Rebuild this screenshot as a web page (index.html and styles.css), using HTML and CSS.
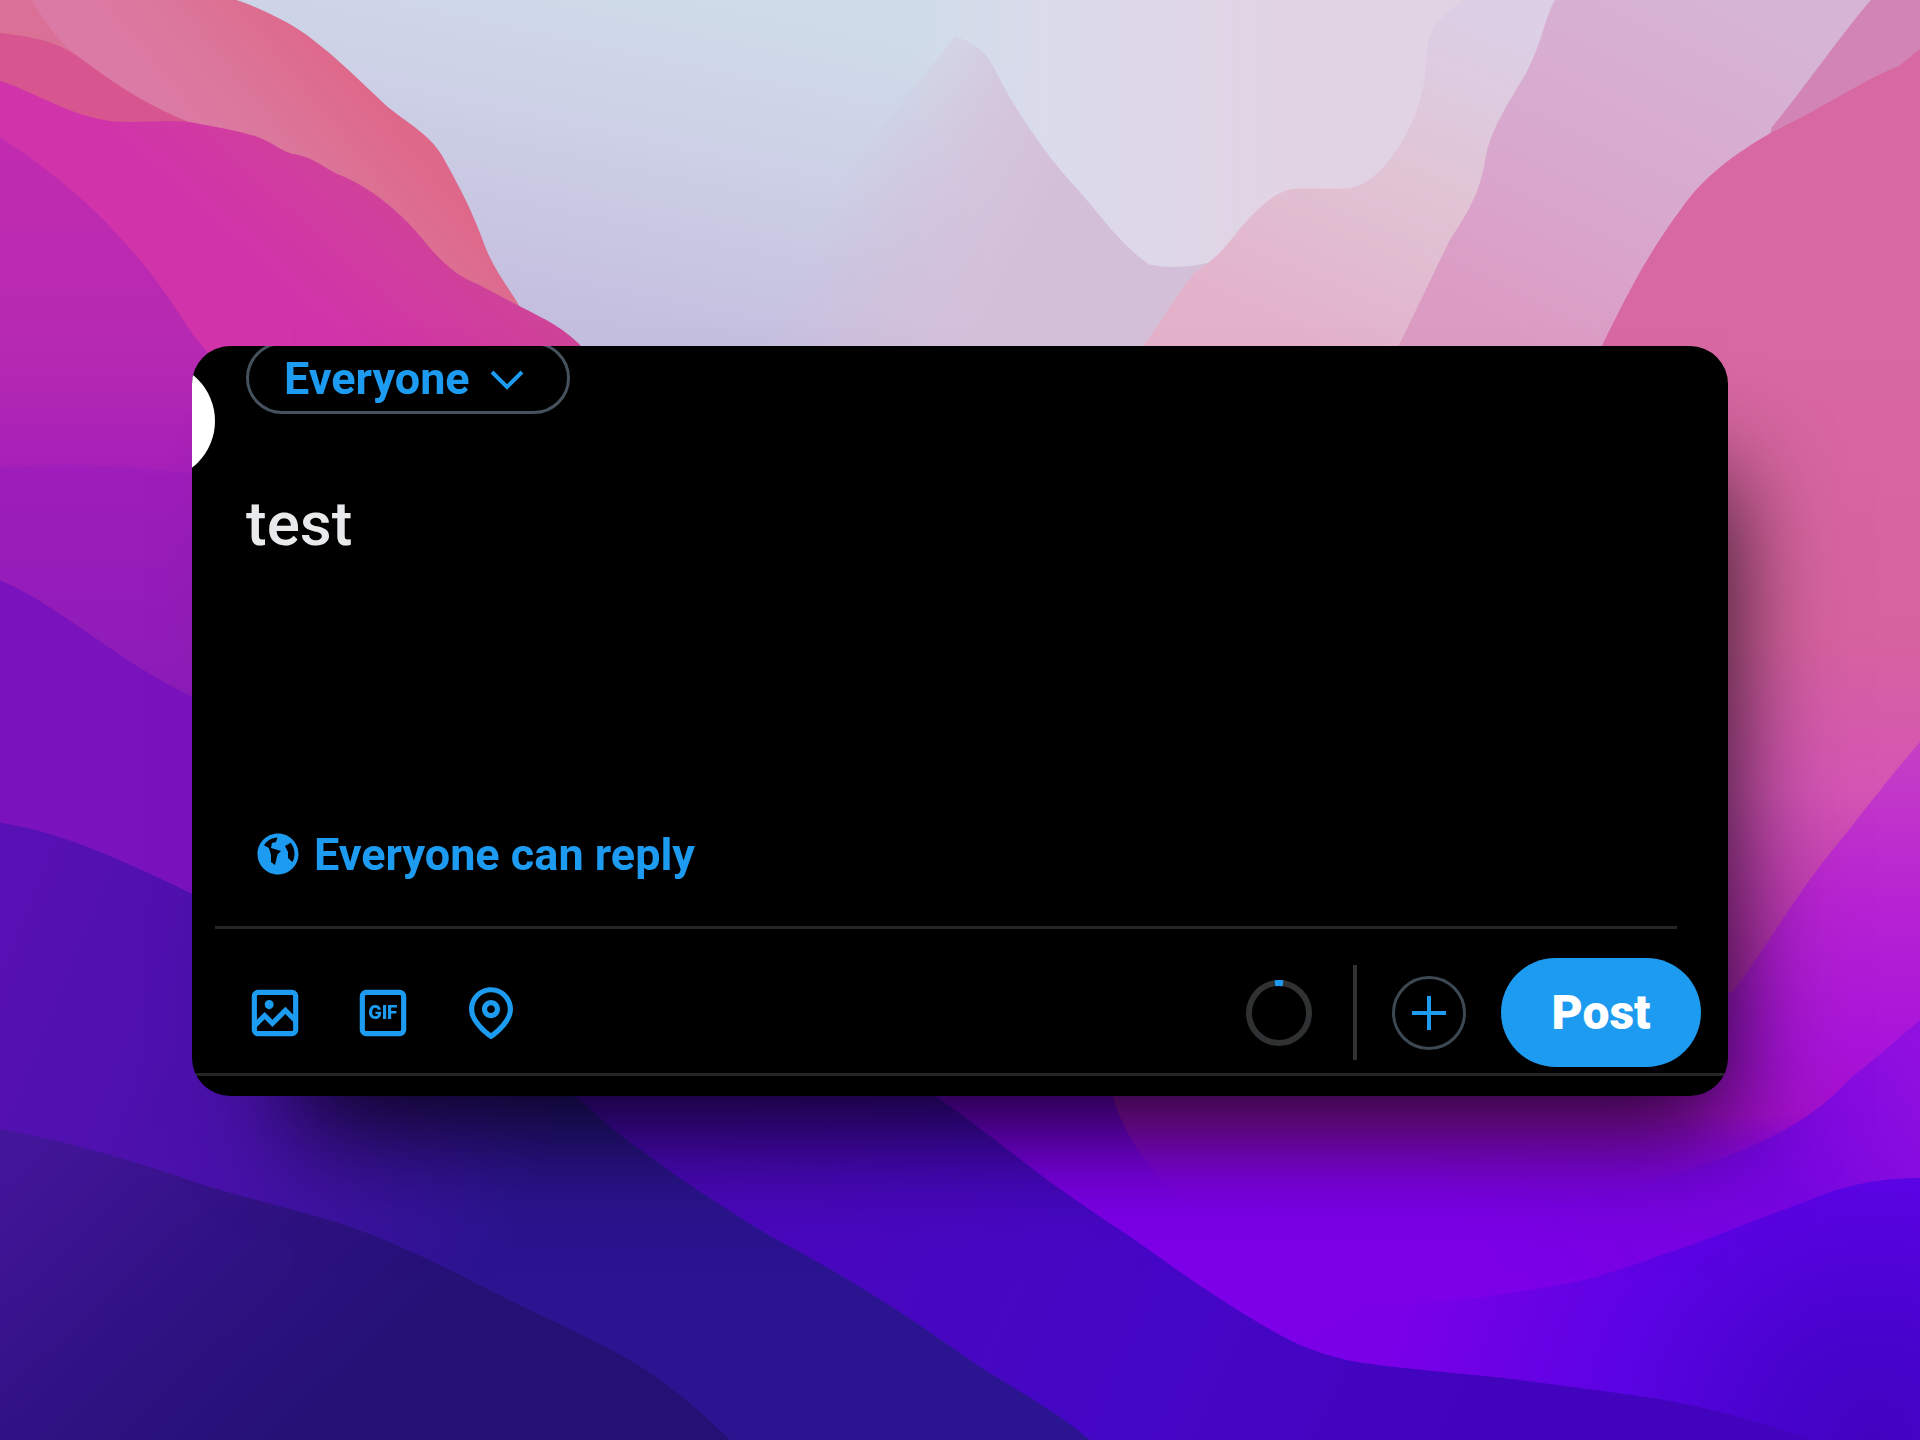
FILE: index.html
```html
<!DOCTYPE html>
<html lang="en">
<head>
<meta charset="utf-8">
<meta name="viewport" content="width=device-width, initial-scale=1">
<title>Compose post</title>
<link rel="stylesheet" href="styles.css">
</head>
<body>
<svg class="wallpaper" viewBox="0 0 1568 1176" preserveAspectRatio="xMidYMid slice" aria-hidden="true">
  <defs>
    <linearGradient id="sky" x1="620" y1="0" x2="560" y2="283" gradientUnits="userSpaceOnUse"><stop offset="0" stop-color="#cfdce9"/><stop offset=".45" stop-color="#cdd0e6"/><stop offset="1" stop-color="#c4bedf"/></linearGradient>
    <linearGradient id="skyRight" x1="740" y1="0" x2="1060" y2="0" gradientUnits="userSpaceOnUse"><stop offset="0" stop-color="#dadbea" stop-opacity="0"/><stop offset=".35" stop-color="#dadbeb"/><stop offset="1" stop-color="#e2d3e4"/></linearGradient>
    <linearGradient id="peak" x1="670" y1="180" x2="810" y2="250" gradientUnits="userSpaceOnUse"><stop offset="0" stop-color="#d3bdd8" stop-opacity="0"/><stop offset=".6" stop-color="#d3bfd9" stop-opacity=".75"/><stop offset="1" stop-color="#d4bfd9"/></linearGradient>
    <linearGradient id="peach" x1="1180" y1="0" x2="1060" y2="283" gradientUnits="userSpaceOnUse"><stop offset="0" stop-color="#dccfe6"/><stop offset=".45" stop-color="#e0c5d5"/><stop offset="1" stop-color="#e3b1ca"/></linearGradient>
    <linearGradient id="orchid" x1="1400" y1="0" x2="1260" y2="283" gradientUnits="userSpaceOnUse"><stop offset="0" stop-color="#d6b4d4"/><stop offset=".6" stop-color="#d9a7ce"/><stop offset="1" stop-color="#dc9bc3"/></linearGradient>
    <linearGradient id="rose" x1="0" y1="283" x2="0" y2="800" gradientUnits="userSpaceOnUse"><stop offset="0" stop-color="#d868a2"/><stop offset=".45" stop-color="#d7639f"/><stop offset=".7" stop-color="#d455b4"/><stop offset="1" stop-color="#b52bb8"/></linearGradient>
    <linearGradient id="coral" x1="180" y1="150" x2="290" y2="60" gradientUnits="userSpaceOnUse"><stop offset="0" stop-color="#db7aa5"/><stop offset=".4" stop-color="#db779b"/><stop offset="1" stop-color="#de688a"/></linearGradient>
    <linearGradient id="magenta" x1="220" y1="230" x2="310" y2="130" gradientUnits="userSpaceOnUse"><stop offset="0" stop-color="#d133aa"/><stop offset="1" stop-color="#cf4497"/></linearGradient>
    <linearGradient id="plum" x1="0" y1="112" x2="0" y2="480" gradientUnits="userSpaceOnUse"><stop offset="0" stop-color="#c12bb0"/><stop offset=".5" stop-color="#b529b2"/><stop offset=".8" stop-color="#a11dba"/><stop offset="1" stop-color="#8f1dba"/></linearGradient>
    <linearGradient id="plumLow" x1="0" y1="380" x2="0" y2="570" gradientUnits="userSpaceOnUse"><stop offset="0" stop-color="#9f1dba"/><stop offset="1" stop-color="#8c1cb8"/></linearGradient>
    <linearGradient id="indigo" x1="0" y1="780" x2="440" y2="960" gradientUnits="userSpaceOnUse"><stop offset="0" stop-color="#5710b3"/><stop offset=".5" stop-color="#4811ab"/><stop offset="1" stop-color="#2a148f"/></linearGradient>
    <linearGradient id="navy" x1="30" y1="930" x2="260" y2="1176" gradientUnits="userSpaceOnUse"><stop offset="0" stop-color="#431599"/><stop offset=".5" stop-color="#301284"/><stop offset="1" stop-color="#231174"/></linearGradient>
    <linearGradient id="fuchsia" x1="0" y1="606" x2="0" y2="985" gradientUnits="userSpaceOnUse"><stop offset="0" stop-color="#c640c4"/><stop offset=".33" stop-color="#b824d2"/><stop offset=".66" stop-color="#a814d9"/><stop offset=".8" stop-color="#a510cf"/><stop offset="1" stop-color="#8000e0" stop-opacity="0"/></linearGradient>
    <linearGradient id="violet" x1="1568" y1="850" x2="1250" y2="1080" gradientUnits="userSpaceOnUse"><stop offset="0" stop-color="#9210df"/><stop offset=".4" stop-color="#7606e0"/><stop offset="1" stop-color="#7c00e8"/></linearGradient>
    <radialGradient id="blueRight" cx="1530" cy="1176" r="400" gradientUnits="userSpaceOnUse"><stop offset="0" stop-color="#4203c0"/><stop offset=".2" stop-color="#4703cc"/><stop offset=".52" stop-color="#5a03e3"/><stop offset="1" stop-color="#7a00e8"/></radialGradient>
    <linearGradient id="deep" x1="600" y1="900" x2="1200" y2="1176" gradientUnits="userSpaceOnUse"><stop offset="0" stop-color="#4a08bb"/><stop offset=".6" stop-color="#4507c6"/><stop offset="1" stop-color="#4203bc"/></linearGradient>
  </defs>
  <rect width="1568" height="1176" fill="url(#sky)"/>
  <rect x="740" width="828" height="300" fill="url(#skyRight)"/>
  <path fill="url(#peak)" d="M560 300L780 30Q802 36 811 54C826 84 837 100 853 122S876 149 889 165S922 206 939 216Q960 221 990 214V300Z"/>
  <path fill="url(#peach)" d="M933 283C945 268 950 258 958 247C966 236 972 224 983 217C996 209 1004 197 1010 190C1025 172 1042 154 1060 154H1100C1124 152 1147 118 1157 90C1166 66 1163 52 1167 32Q1171 16 1195 0H1280V300H933Z"/>
  <path fill="url(#orchid)" d="M1270 0C1261 14 1258 44 1240 70C1227 92 1216 110 1213 130C1208 162 1193 182 1184 196C1170 225 1155 256 1142 283H1568V0Z"/>
  <path fill="#d184b5" d="M1528 0C1505 26 1475 70 1447 104L1440 130H1568V0Z"/>
  <path fill="url(#rose)" d="M1568 40L1551 54C1522 65 1486 90 1447 108C1416 126 1390 145 1372 172C1345 208 1327 244 1308 283L1250 900H1568Z"/>
  <path fill="url(#violet)" d="M1568 833L1400 880H740V1176H1568Z"/>
  <path fill="url(#fuchsia)" d="M1568 606C1545 632 1522 663 1496 695C1468 729 1442 774 1415 810L905 880C912 915 930 950 970 985H1280C1340 968 1390 954 1435 934C1462 922 1488 906 1512 880C1530 866 1548 850 1568 833Z"/>
  <path fill="url(#blueRight)" d="M1568 962C1530 962 1500 970 1478 980C1442 993 1412 1005 1378 1018C1350 1027 1325 1037 1295 1045C1265 1052 1240 1055 1212 1059C1180 1064 1150 1064 1120 1066L1045 1110V1176H1568Z"/>
  <path fill="url(#deep)" d="M764 895C798 919 824 940 856 964C878 980 900 995 923 1010C946 1026 966 1041 989 1056C1008 1068 1026 1080 1045 1090C1068 1103 1090 1109 1112 1113C1160 1120 1220 1123 1278 1132C1312 1137 1346 1140 1378 1147C1410 1154 1440 1162 1480 1176H500L440 880Z"/>
  <path fill="url(#coral)" d="M0 0H193C212 6 240 20 255 32C276 48 294 66 312 83C328 98 350 108 361 127C376 154 386 173 396 201C404 222 418 238 424 250V300H0Z"/>
  <path fill="#da7095" d="M0 0H25C38 18 44 30 60 43L62 60H0Z"/>
  <path fill="#d8568f" d="M0 27C26 30 46 34 62 45C80 58 96 70 112 79Q134 92 160 102L100 120L0 110Z"/>
  <path fill="url(#magenta)" d="M0 66C30 76 60 96 92 99C112 101 134 97 157 100C178 104 196 107 211 112C224 117 232 125 241 126C258 129 268 140 280 144C308 156 332 179 345 195C360 214 374 226 390 232L424 250C446 261 460 268 475 283V320H0Z"/>
  <path fill="url(#plum)" d="M0 112C40 138 76 168 98 194C124 222 140 246 150 262C160 278 170 288 180 300V500H0Z"/>
  <path fill="url(#plumLow)" d="M0 382Q80 375 180 390V600H0Z"/>
  <path fill="#7a13be" d="M0 474C50 494 100 545 170 575V760H0Z"/>
  <path fill="url(#indigo)" d="M0 672C50 680 90 698 157 730L470 895C488 911 506 928 523 939C552 961 590 986 630 1010C660 1026 690 1043 720 1062C746 1078 774 1098 800 1116C826 1133 862 1152 890 1176H0Z"/>
  <path fill="url(#navy)" d="M0 922C60 933 120 951 167 968C200 978 235 986 267 996C290 1003 312 1011 333 1021C356 1031 378 1042 400 1054C440 1074 490 1096 523 1116Q560 1140 596 1176H0Z"/>
</svg>

<main class="stage">
  <form class="composer">
    <div class="compose">
      <div class="avatar"></div>
      <div class="content">
        <div class="audience">
          <select class="audience-select" aria-label="Audience"><option>Everyone</option></select>
          <svg class="chevron" viewBox="0 0 34 22" aria-hidden="true"><path d="M2 3L17 18L32 3"/></svg>
        </div>
        <textarea class="draft" aria-label="Post text" spellcheck="false">test</textarea>
        <button class="reply" type="button">
          <svg class="globe" viewBox="0 0 24 24" aria-hidden="true"><path fill-rule="evenodd" d="M12 1.750C6.340 1.750 1.750 6.340 1.750 12S6.340 22.250 12 22.250 22.250 17.660 22.250 12 17.660 1.750 12 1.750zm-.250 10.480L10.500 17.500l-2-1.500v-3.500L7.500 9 5.030 7.590c1.420-2.240 3.890-3.750 6.720-3.840L11 6l-2 .500L8.500 9l5 1.500-1.750 1.730zM17 14v-3l-1.500-3 2.880-1.590C19.580 7.930 20.250 9.880 20.250 12c0 1.470-.380 2.850-1.060 4.050L17 14z"/></svg>
          Everyone can reply
        </button>
      </div>
    </div>
    <div class="toolbar">
      <div class="tools">
        <button class="tool" type="button" aria-label="Add media">
          <svg viewBox="0 0 24 24" aria-hidden="true"><path d="M3 5.500C3 4.119 4.119 3 5.500 3h13C19.881 3 21 4.119 21 5.500v13c0 1.381-1.119 2.500-2.500 2.500h-13C4.119 21 3 19.881 3 18.500v-13zM5.500 5c-.276 0-.500.224-.500.500v9.086l3-3 3 3 5-5 3 3V5.500c0-.276-.224-.500-.500-.500h-13zM19 15.414l-3-3-5 5-3-3-3 3V18.500c0 .276.224.500.500.500h13c.276 0 .500-.224.500-.500v-3.086zM9.750 7C8.784 7 8 7.784 8 8.750s.784 1.750 1.750 1.750 1.750-.784 1.750-1.750S10.716 7 9.750 7z"/></svg>
        </button>
        <button class="tool" type="button" aria-label="Add a GIF">
          <svg viewBox="0 0 24 24" aria-hidden="true"><rect class="frame" x="4" y="4" width="16" height="16" rx="1.500"/><text class="gif" x="12" y="14.500">GIF</text></svg>
        </button>
        <button class="tool" type="button" aria-label="Tag location">
          <svg viewBox="0 0 24 24" aria-hidden="true"><path d="M12 7c-1.930 0-3.500 1.570-3.500 3.500S10.070 14 12 14s3.500-1.570 3.500-3.500S13.930 7 12 7zm0 5c-.827 0-1.500-.673-1.500-1.500S11.173 9 12 9s1.500.673 1.500 1.500S12.827 12 12 12zm0-10c-4.687 0-8.500 3.813-8.500 8.500 0 5.967 7.621 11.116 7.945 11.332l.555.370.555-.370c.324-.216 7.945-5.365 7.945-11.332C20.500 5.813 16.687 2 12 2zm0 17.770c-1.665-1.241-6.500-5.196-6.500-9.270C5.500 6.916 8.416 4 12 4s6.500 2.916 6.500 6.500c0 4.073-4.835 8.028-6.500 9.270z"/></svg>
        </button>
      </div>
      <div class="actions">
        <svg class="counter" viewBox="0 0 68 68" role="img" aria-label="Characters used"><circle cx="34" cy="34" r="30"/><path d="M30 4.300Q34 3.700 38 4.300"/></svg>
        <span class="separator"></span>
        <button class="add" type="button" aria-label="Add another post"><svg viewBox="0 0 34 34" aria-hidden="true"><path d="M17 0V34M0 17H34"/></svg></button>
        <button class="post" type="submit">Post</button>
      </div>
    </div>
  </form>
</main>
</body>
</html>
```
FILE: styles.css
```css
* {
  box-sizing: border-box;
}

body {
  margin: 0;
  font-family: Roboto, "Liberation Sans", sans-serif;
  background: #4a0bb0;
}

button,
select,
textarea {
  margin: 0;
  padding: 0;
  border: 0;
  background: none;
  font: inherit;
  color: inherit;
}

svg {
  display: block;
}

.wallpaper {
  position: fixed;
  inset: 0;
  z-index: -1;
  width: 100%;
  height: 100%;
}

.stage {
  display: grid;
  align-content: center;
  min-height: 100vh;
  padding: 2px 10% 0;
}

.composer {
  overflow: hidden;
  padding-bottom: 20px;
  border-radius: 38px;
  background: #000;
  color: #1d9bf0;
  box-shadow: 50px 80px 100px -50px rgba(0, 0, 0, 0.85);
}

.compose {
  display: flex;
  gap: 31px;
  margin: 0 51px 0 23px;
  padding-bottom: 44px;
  border-bottom: 3px solid #242628;
}

.avatar {
  flex: none;
  width: 118px;
  height: 118px;
  margin: 16px 0 0 -118px;
  border-radius: 50%;
  background: #fff;
}

.content {
  flex: 1;
  display: flex;
  flex-direction: column;
  align-items: flex-start;
  margin-top: -4px;
}

.audience {
  display: grid;
  align-items: center;
  width: 324px;
  height: 72px;
}

.audience-select {
  grid-area: 1 / 1;
  width: 100%;
  height: 100%;
  padding-left: 35px;
  border: 3px solid #45525d;
  border-radius: 36px;
  appearance: none;
  font-size: 45px;
  font-weight: 700;
}

.chevron {
  grid-area: 1 / 1;
  justify-self: end;
  width: 34px;
  height: 22px;
  margin: 4px 46px 0 0;
  pointer-events: none;
}

.chevron path {
  fill: none;
  stroke: currentColor;
  stroke-width: 4;
}

.draft {
  width: 100%;
  height: 340px;
  margin-top: 72px;
  outline: 0;
  resize: none;
  font-size: 62px;
  font-weight: 500;
  line-height: 76px;
  color: #e7e9ea;
}

.reply {
  display: flex;
  align-items: center;
  gap: 12px;
  height: 56px;
  padding-left: 8px;
  font-size: 45px;
  font-weight: 700;
}

.globe {
  width: 48px;
  height: 48px;
  fill: currentColor;
}

.toolbar {
  display: flex;
  align-items: center;
  justify-content: space-between;
  padding: 29px 27px 6px 52px;
  border-bottom: 3px solid #242628;
}

.tools {
  display: flex;
  gap: 46px;
}

.tool {
  width: 62px;
  height: 62px;
  fill: currentColor;
}

.frame {
  fill: none;
  stroke: currentColor;
  stroke-width: 2;
}

.gif {
  font-family: Inter, sans-serif;
  font-size: 7px;
  font-weight: 800;
  text-anchor: middle;
}

.actions {
  display: flex;
  align-items: center;
}

.counter {
  width: 68px;
  height: 68px;
  margin-right: 40px;
  fill: none;
  stroke: #2f3132;
  stroke-width: 6;
}

.counter path {
  stroke: #1d9bf0;
}

.separator {
  width: 4px;
  height: 95px;
  margin-right: 35px;
  background: #303233;
}

.add {
  display: grid;
  place-items: center;
  width: 74px;
  height: 74px;
  margin-right: 35px;
  border: 3px solid #3d4852;
  border-radius: 50%;
}

.add svg {
  width: 34px;
  height: 34px;
  stroke: currentColor;
  stroke-width: 4;
}

.post {
  width: 200px;
  height: 109px;
  border-radius: 55px;
  background: #1d9bf0;
  font-size: 48px;
  font-weight: 900;
  color: #fff;
}
```
